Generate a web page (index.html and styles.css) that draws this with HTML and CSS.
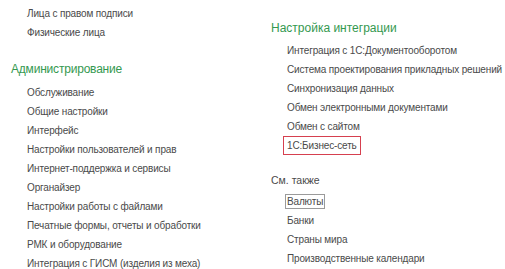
FILE: index.html
```html
<!DOCTYPE html>
<html lang="ru">
<head>
<meta charset="utf-8">
<link rel="stylesheet" href="styles.css">
</head>
<body>
<div class="page">
  <div class="col col-left">
    <ul class="items">
      <li>Лица с правом подписи</li>
      <li>Физические лица</li>
    </ul>
    <h2 class="heading heading-admin">Администрирование</h2>
    <ul class="items">
      <li>Обслуживание</li>
      <li>Общие настройки</li>
      <li>Интерфейс</li>
      <li>Настройки пользователей и прав</li>
      <li>Интернет-поддержка и сервисы</li>
      <li>Органайзер</li>
      <li>Настройки работы с файлами</li>
      <li>Печатные формы, отчеты и обработки</li>
      <li>РМК и оборудование</li>
      <li>Интеграция с ГИСМ (изделия из меха)</li>
    </ul>
  </div>
  <div class="col col-right">
    <h2 class="heading heading-integr">Настройка интеграции</h2>
    <ul class="items">
      <li>Интеграция с 1С:Документооборотом</li>
      <li>Система проектирования прикладных решений</li>
      <li>Синхронизация данных</li>
      <li>Обмен электронными документами</li>
      <li>Обмен с сайтом</li>
      <li><span class="mark-red">1С:Бизнес-сеть</span></li>
    </ul>
    <div class="see-also">См. также</div>
    <ul class="items">
      <li><span class="mark-gray">Валюты</span></li>
      <li>Банки</li>
      <li>Страны мира</li>
      <li>Производственные календари</li>
    </ul>
  </div>
</div>
</body>
</html>
```
FILE: styles.css
```css
html, body {
  margin: 0;
  padding: 0;
  background: #ffffff;
}
body {
  font-family: "Liberation Sans", Arial, sans-serif;
  color: #4a4a4a;
  width: 505px;
  height: 269px;
  overflow: hidden;
}
.page {
  display: grid;
  grid-template-columns: 260px 1fr;
}
.col {
  display: flex;
  flex-direction: column;
}
.col-left {
  padding-left: 11px;
  padding-top: 4px;
}
.col-right {
  padding-left: 11px;
  padding-top: 18px;
}
.items {
  list-style: none;
  margin: 0;
  padding: 0 0 0 16px;
}
.items li {
  font-size: 10px;
  letter-spacing: -0.15px;
  line-height: 19px;
  height: 19px;
  white-space: nowrap;
}
.heading {
  margin: 0;
  font-weight: normal;
  font-size: 12px;
  line-height: 20px;
  color: #34994f;
  white-space: nowrap;
}
.heading-admin {
  letter-spacing: -0.2px;
  margin-top: 17px;
  margin-bottom: 4px;
}
.heading-integr {
  margin-bottom: 3px;
}
.see-also {
  font-size: 10.5px;
  line-height: 20px;
  margin-top: 15px;
  margin-bottom: 2px;
  color: #4a4a4a;
}
.mark-red {
  outline: 1.5px solid #d6404f;
  outline-offset: 3px;
}
.mark-gray {
  outline: 1px solid #9a9a9a;
  outline-offset: 1px;
}
```
